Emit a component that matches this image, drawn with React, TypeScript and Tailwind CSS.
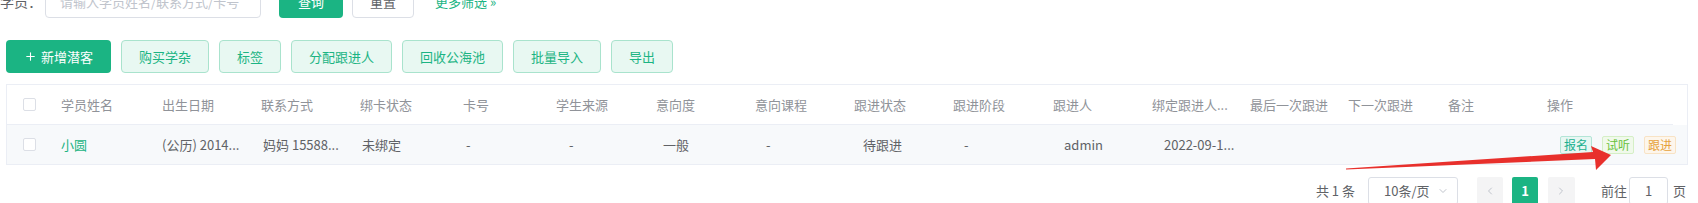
import { ChevronDown, ChevronLeft, ChevronRight, Plus } from 'lucide-react'

const heads = ['学员姓名', '出生日期', '联系方式', '绑卡状态', '卡号', '学生来源', '意向度', '意向课程', '跟进状态', '跟进阶段', '跟进人', '绑定跟进人...', '最后一次跟进', '下一次跟进', '备注', '操作']

const cols = 'grid-cols-[44px_101px_99px_99px_103px_93px_100px_99px_99px_99px_100px_99px_98px_98px_100px_99px_1fr]'

const tools = ['购买学杂', '标签', '分配跟进人', '回收公海池', '批量导入', '导出']

function Checkbox() {
  return <span className="block h-[13px] w-[13px] rounded-[2px] border border-[#dcdfe6] bg-white" />
}

export default function App() {
  return (
    <div
      className="relative h-[203px] w-[1698px] overflow-hidden bg-white text-[13px] text-[#606266]"
      style={{ fontFamily: '"Noto Sans CJK SC", "Noto Sans", sans-serif' }}
    >
      <div className="-mt-[15px] flex flex-col">
        {/* search row */}
        <div className="flex h-[33px] items-center">
          <span className="w-[45px] text-[14px] text-[#606266]">学员：</span>
          <div className="flex h-[32px] w-[216px] items-center rounded-[4px] border border-[#dcdfe6] pl-[14px] text-[13px] text-[#c0c4cc]">
            请输入学员姓名/联系方式/卡号
          </div>
          <button className="ml-[18px] h-[33px] w-[64px] rounded-[4px] bg-[#1bb483] text-[13px] text-white">查询</button>
          <button className="ml-[9px] h-[33px] w-[62px] rounded-[4px] border border-[#dcdfe6] bg-white text-[13px] text-[#606266]">重置</button>
          <span className="ml-[21px] text-[13px] text-[#1bb483]">更多筛选 »</span>
        </div>

        {/* toolbar */}
        <div className="mt-[22px] flex items-center gap-[10px] pl-[6px]">
          <button className="flex h-[33px] w-[105px] items-center justify-center gap-[4px] rounded-[4px] bg-[#1bb483] text-[13px] text-white">
            <Plus size={13} strokeWidth={2} />
            新增潜客
          </button>
          {tools.map((t) => (
            <button
              key={t}
              className="h-[33px] rounded-[4px] border border-[#a9e3cd] bg-[#e8f8f2] px-[17px] text-[13px] text-[#1bb483]"
            >
              {t}
            </button>
          ))}
        </div>

        {/* table */}
        <div className="ml-[6px] mr-[10px] mt-[11px] border border-[#ebeef5]">
          <div className={`mr-[14px] grid h-[40px] items-center border-b border-[#ebeef5] text-[#909399] ${cols}`}>
            <div className="pl-[16px]">
              <Checkbox />
            </div>
            {heads.map((h) => (
              <div key={h} className="truncate pl-[10px]">
                {h}
              </div>
            ))}
          </div>
          <div className={`grid h-[39px] items-center bg-[#f7f9fb] ${cols}`}>
            <div className="pl-[16px]">
              <Checkbox />
            </div>
            <div className="pl-[10px] text-[#1bb483]">小圆</div>
            <div className="pl-[10px]">(公历) 2014...</div>
            <div className="pl-[12px]">妈妈 15588...</div>
            <div className="pl-[12px]">未绑定</div>
            <div className="pl-[13px]">-</div>
            <div className="pl-[23px]">-</div>
            <div className="pl-[17px]">一般</div>
            <div className="pl-[21px]">-</div>
            <div className="pl-[19px]">待跟进</div>
            <div className="pl-[21px]">-</div>
            <div className="pl-[21px]">admin</div>
            <div className="pl-[22px]">2022-09-1...</div>
            <div />
            <div />
            <div />
            <div className="flex justify-end gap-[10px] pr-[11px] text-[12px]">
              <span className="rounded-[2px] border border-[#b3e5d6] bg-[#e8f7f3] px-[3px] leading-[16px] text-[#1bb08f]">报名</span>
              <span className="rounded-[2px] border border-[#d5efc6] bg-[#f0f9eb] px-[3px] leading-[16px] text-[#67c23a]">试听</span>
              <span className="rounded-[2px] border border-[#f8e3c5] bg-[#fdf6ec] px-[3px] leading-[16px] text-[#e6a23c]">跟进</span>
            </div>
          </div>
        </div>

        {/* pagination */}
        <div className="mt-[12px] flex h-[28px] items-center justify-end pr-[12px]">
          <span className="mr-[13px]">共 1 条</span>
          <div className="flex h-[28px] w-[90px] items-center justify-between rounded-[3px] border border-[#dcdfe6] pl-[15px] pr-[8px]">
            <span>10条/页</span>
            <ChevronDown size={12} className="text-[#c0c4cc]" />
          </div>
          <div className="ml-[19px] flex h-[28px] w-[26px] items-center justify-center rounded-[2px] bg-[#f4f4f5] text-[#c0c4cc]">
            <ChevronLeft size={12} />
          </div>
          <div className="ml-[9px] flex h-[28px] w-[26px] items-center justify-center rounded-[2px] bg-[#1bb483] font-bold text-white">1</div>
          <div className="ml-[10px] flex h-[28px] w-[27px] items-center justify-center rounded-[2px] bg-[#f4f4f5] text-[#c0c4cc]">
            <ChevronRight size={12} />
          </div>
          <span className="ml-[26px]">前往</span>
          <div className="ml-[2px] flex h-[28px] w-[39px] items-center justify-center rounded-[3px] border border-[#dcdfe6]">1</div>
          <span className="ml-[5px]">页</span>
        </div>
      </div>

      {/* red annotation arrow */}
      <svg className="pointer-events-none absolute left-0 top-0" width="1698" height="203" viewBox="0 0 1698 203">
        <polygon
          points="1346,168.5 1593,152 1591,146 1611,155 1596,170 1595,159 1346,169.6"
          fill="#e8302c"
        />
      </svg>
    </div>
  )
}
